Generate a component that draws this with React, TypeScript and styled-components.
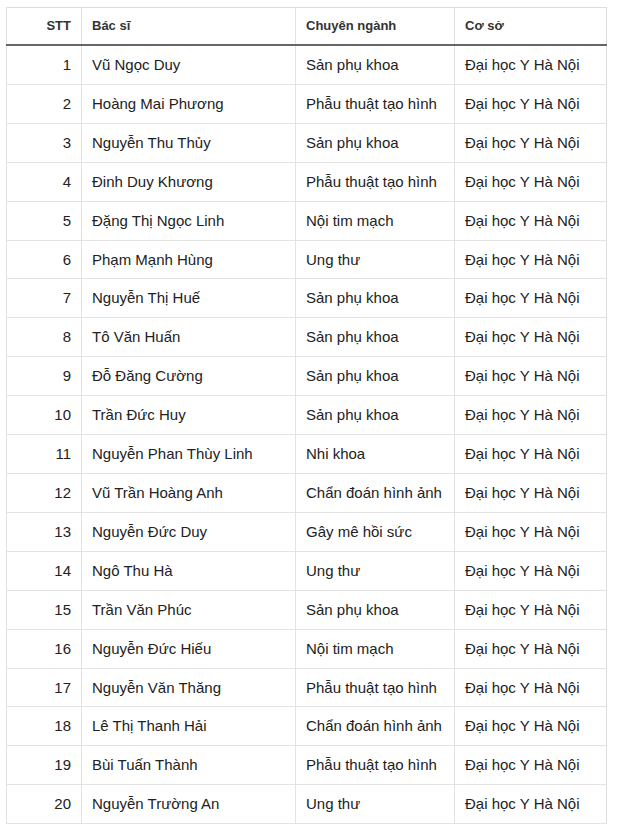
import styled, { createGlobalStyle } from 'styled-components';

const GlobalStyle = createGlobalStyle`
    body {
        margin: 0;
        background: #fff;
        font-family: 'Liberation Sans', Arial, sans-serif;
    }
`;

const Wrapper = styled.div`
    padding: 7px 0 0 6px;
`;

const Table = styled.table`
    width: 601px;
    border-collapse: collapse;
    table-layout: fixed;
    border: 1px solid #dddddd;
    color: #222;
`;

const HeadCell = styled.th<{ $right?: boolean }>`
    padding: 8px 10px;
    line-height: 20px;
    font-size: 13px;
    font-weight: bold;
    color: #333;
    text-align: ${({ $right }) => ($right ? 'right' : 'left')};
    border-left: 1px solid #e3e3e3;
    border-bottom: 2px solid #666;
    white-space: nowrap;
`;

const Cell = styled.td<{ $right?: boolean }>`
    padding: 9px 10px;
    line-height: 19.9px;
    font-size: 15px;
    text-align: ${({ $right }) => ($right ? 'right' : 'left')};
    border-left: 1px solid #e3e3e3;
    border-bottom: 1px solid #e3e3e3;
    white-space: nowrap;
`;

const HN = 'Đại học Y Hà Nội';

const doctors: [string, string][] = [
    ['Vũ Ngọc Duy', 'Sản phụ khoa'],
    ['Hoàng Mai Phương', 'Phẫu thuật tạo hình'],
    ['Nguyễn Thu Thủy', 'Sản phụ khoa'],
    ['Đinh Duy Khương', 'Phẫu thuật tạo hình'],
    ['Đặng Thị Ngọc Linh', 'Nội tim mạch'],
    ['Phạm Mạnh Hùng', 'Ung thư'],
    ['Nguyễn Thị Huế', 'Sản phụ khoa'],
    ['Tô Văn Huấn', 'Sản phụ khoa'],
    ['Đỗ Đăng Cường', 'Sản phụ khoa'],
    ['Trần Đức Huy', 'Sản phụ khoa'],
    ['Nguyễn Phan Thùy Linh', 'Nhi khoa'],
    ['Vũ Trần Hoàng Anh', 'Chẩn đoán hình ảnh'],
    ['Nguyễn Đức Duy', 'Gây mê hồi sức'],
    ['Ngô Thu Hà', 'Ung thư'],
    ['Trần Văn Phúc', 'Sản phụ khoa'],
    ['Nguyễn Đức Hiếu', 'Nội tim mạch'],
    ['Nguyễn Văn Thăng', 'Phẫu thuật tạo hình'],
    ['Lê Thị Thanh Hải', 'Chẩn đoán hình ảnh'],
    ['Bùi Tuấn Thành', 'Phẫu thuật tạo hình'],
    ['Nguyễn Trường An', 'Ung thư'],
];

const App = () => (
    <Wrapper>
        <GlobalStyle />
        <Table>
            <colgroup>
                <col style={{ width: 75 }} />
                <col style={{ width: 214 }} />
                <col style={{ width: 159 }} />
                <col style={{ width: 152 }} />
            </colgroup>
            <thead>
                <tr>
                    <HeadCell $right>STT</HeadCell>
                    <HeadCell>Bác sĩ</HeadCell>
                    <HeadCell>Chuyên ngành</HeadCell>
                    <HeadCell>Cơ sở</HeadCell>
                </tr>
            </thead>
            <tbody>
                {doctors.map(([name, field], i) => (
                    <tr key={name}>
                        <Cell $right>{i + 1}</Cell>
                        <Cell>{name}</Cell>
                        <Cell>{field}</Cell>
                        <Cell>{HN}</Cell>
                    </tr>
                ))}
            </tbody>
        </Table>
    </Wrapper>
);

export default App;
